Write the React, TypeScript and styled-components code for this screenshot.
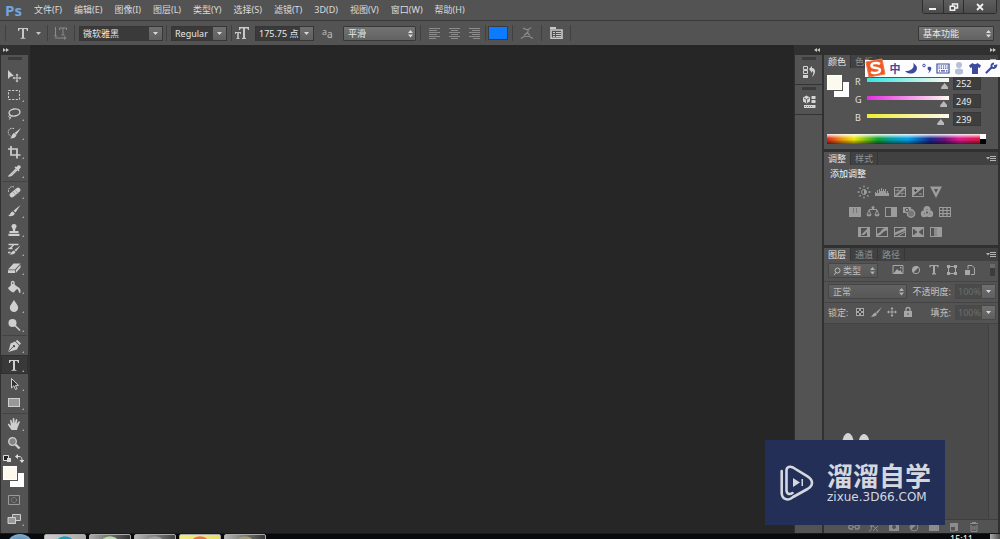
import React from "react";
import styled, { createGlobalStyle, css } from "styled-components";

const GlobalStyle = createGlobalStyle`
  * { box-sizing: border-box; }
  html, body { margin: 0; padding: 0; background: #262626; }
  body, button, input, select {
    font-family: "Noto Sans", "Noto Sans CJK SC", sans-serif;
    font-size: 9px;
    color: #dcdcdc;
  }
  button, input, select { margin: 0; padding: 0; border: 0; border-radius: 0; background: none; outline: 0; }
  h2 { margin: 0; font-weight: 400; }
`;

/* ---------- shell ---------- */

const Window = styled.div`
  position: relative;
  display: flex;
  flex-direction: column;
  height: 100vh;
  min-width: 800px;
  overflow: hidden;
  background: #262626;
`;

const MenuBar = styled.header`
  display: flex;
  align-items: flex-start;
  flex: none;
  height: 21px;
  padding: 0 3px 0 5px;
  background: #535353;
  border-bottom: 1px solid #3a3a3a;
`;

const Brand = styled.div`
  width: 29px;
  font: 700 15px/20px "Open Sans", sans-serif;
  color: #72a5df;
`;

const Menus = styled.nav`
  display: flex;
  flex: 1;
  gap: 12px;
`;

const MenuButton = styled.button`
  line-height: 20px;
  white-space: nowrap;
`;

const WindowControls = styled.div`
  display: flex;
  height: 14px;
  border: 1px solid #2e2e2e;
  border-top: 0;
  border-radius: 0 0 3px 3px;
`;

const WindowButton = styled.button<{ $wide?: boolean }>`
  display: grid;
  place-items: center;
  width: ${(p) => (p.$wide ? 33 : 20)}px;
  background: linear-gradient(#5e5e5e, #4c4c4c);
  color: #f0f0f0;
  & + & { border-left: 1px solid #2e2e2e; }
`;

const OptionsBar = styled.div`
  display: flex;
  align-items: center;
  flex: none;
  height: 24px;
  padding: 0 6px 0 5px;
  background: #535353;
`;

const Rule = styled.span<{ $before?: number; $after?: number }>`
  width: 1px;
  height: 16px;
  margin: 0 ${(p) => p.$after ?? 4}px 0 ${(p) => p.$before ?? 4}px;
  background: #404040;
`;

const IconButton = styled.button<{ $w?: number; $dim?: boolean }>`
  display: grid;
  place-items: center;
  flex: none;
  width: ${(p) => p.$w ?? 20}px;
  height: 18px;
  color: ${(p) => (p.$dim ? "#8c8c8c" : "#c8c8c8")};
`;

const Combo = styled.div<{ $w: number; $off?: boolean }>`
  display: flex;
  flex: none;
  width: ${(p) => p.$w}px;
  height: 15px;
  border: 1px solid ${(p) => (p.$off ? "#484848" : "#363636")};
  background: ${(p) => (p.$off ? "#4a4a4a" : "#3a3a3a")};
  input {
    flex: 1;
    min-width: 0;
    padding: 0 0 0 ${(p) => (p.$off ? 2 : 3)}px;
    color: ${(p) => (p.$off ? "#6c6c6c" : "#e8e8e8")};
  }
`;

const DropButton = styled.button`
  display: grid;
  place-items: center;
  width: 13px;
  background: linear-gradient(#6f6f6f, #5f5f5f);
  color: #d8d8d8;
`;

const SelectBox = styled.div<{ $w: number; $soft?: boolean }>`
  position: relative;
  flex: none;
  width: ${(p) => p.$w}px;
  height: 15px;
  border: 1px solid ${(p) => (p.$soft ? "#464646" : "#383838")};
  border-radius: 1px;
  background: ${(p) => (p.$soft ? "linear-gradient(#616161, #575757)" : "linear-gradient(#737373, #626262)")};
  color: ${(p) => (p.$soft ? "#b0b0b0" : "#dcdcdc")};
  svg { position: absolute; right: 1px; top: 2px; pointer-events: none; }
`;

const Select = styled.select<{ $indent?: number; $soft?: boolean }>`
  appearance: none;
  display: block;
  width: 100%;
  height: 13px;
  padding-left: ${(p) => p.$indent ?? 4}px;
  line-height: 13px;
  color: ${(p) => (p.$soft ? "#bcbcbc" : "#e8e8e8")};
`;

const TextColor = styled.button`
  width: 20px;
  height: 14px;
  border: 1px solid #3c3c3c;
  background: #0d7bff;
`;

const Spring = styled.div`flex: 1;`;

const Spacer = styled.span`width: 3px;`;

const Aa = styled.span`
  display: flex;
  width: 29px;
  padding-left: 8px;
  font-size: 9px;
  line-height: 11px;
  color: #bdbdbd;
  b { padding-top: 3px; font-size: 10px; font-weight: 400; }
`;

const Workspace = styled.div`
  display: flex;
  flex: 1;
  min-height: 0;
`;

/* ---------- tools ---------- */

const ToolColumn = styled.aside`
  display: flex;
  flex-direction: column;
  flex: none;
  width: 30px;
  padding: 0 2px 0 1px;
  background: #303030;
`;

const CollapseBar = styled.button<{ $right?: boolean }>`
  display: flex;
  align-items: center;
  justify-content: ${(p) => (p.$right ? "flex-end" : "flex-start")};
  flex: none;
  width: 100%;
  height: 10px;
  padding: 0 2px;
  color: #c4c4c4;
`;

const ToolPanel = styled.div`
  display: flex;
  flex-direction: column;
  flex: 1;
  background: #535353;
`;

const Grip = styled.span`
  align-self: center;
  flex: none;
  width: 14px;
  height: 3px;
  margin: 2px 0 6px;
  background: #3c3c3c;
`;

const Tool = styled.button<{ $active?: boolean }>`
  position: relative;
  display: grid;
  place-items: center;
  flex: none;
  height: 19px;
  padding-right: 2px;
  color: #cfcfcf;
  ${(p) => p.$active && css`background: #393939; box-shadow: inset 0 0 0 1px #303030;`}
`;

const Flyout = styled.span`
  position: absolute;
  right: 4px;
  bottom: 2px;
  border: 1px solid #a8a8a8;
  border-top-color: transparent;
  border-left-color: transparent;
`;

const ToolRule = styled.span`
  flex: none;
  height: 1px;
  margin: 1px 1px 0;
  background: #434343;
`;

const ColorReset = styled.div`
  display: flex;
  justify-content: space-between;
  flex: none;
  height: 14px;
  padding: 2px 4px 0 2px;
  color: #d0d0d0;
  button { width: 9px; height: 9px; }
  svg { display: block; }
`;

const SwatchPair = styled.div<{ $size: number }>`
  display: grid;
  flex: none;
  width: ${(p) => p.$size + 7}px;
  height: ${(p) => p.$size + 7}px;
  button { width: ${(p) => p.$size}px; height: ${(p) => p.$size}px; grid-area: 1 / 1; }
  button:first-child { align-self: end; justify-self: end; background: #fff; }
  button:last-child { background: #fcf9ef; border: 1px solid #fff; outline: 1px solid #555; }
`;

const ToolSwatches = styled.div`
  display: flex;
  flex: none;
  height: 24px;
  padding: 0 0 0 2px;
`;

/* ---------- docks ---------- */

const Canvas = styled.main`flex: 1; background: #262626;`;

const IconDock = styled.aside`
  display: flex;
  flex-direction: column;
  flex: none;
  width: 30px;
  padding: 0 2px 0 1px;
  background: #303030;
`;

const DockBody = styled.div`flex: 1; background: #535353;`;

const DockGroup = styled.div`
  display: flex;
  flex-direction: column;
  height: 30px;
  border-bottom: 1px solid #333;
  color: #d4d4d4;
  button { display: grid; place-items: center; height: 18px; color: inherit; }
`;

const DockGrip = styled.span`
  align-self: center;
  width: 14px;
  height: 3px;
  margin: 2px 0 3px;
  background: #3c3c3c;
`;

const PanelDock = styled.aside`
  display: flex;
  flex-direction: column;
  flex: none;
  width: 176px;
  padding-right: 2px;
  background: #303030;
`;

const Panel = styled.section<{ $h?: number }>`
  display: flex;
  flex-direction: column;
  min-height: 0;
  ${(p) => (p.$h ? css`flex: none; height: ${p.$h}px; margin-bottom: 3px;` : css`flex: 1;`)}
`;

const Tabs = styled.div`
  display: flex;
  align-items: stretch;
  flex: none;
  height: 13px;
  background: #414141;
`;

const Tab = styled.button<{ $on?: boolean }>`
  width: 27px;
  border-right: 1px solid #363636;
  line-height: 12px;
  white-space: nowrap;
  color: ${(p) => (p.$on ? "#e6e6e6" : "#929292")};
  background: ${(p) => (p.$on ? "#535353" : "transparent")};
`;

const PanelMenu = styled.button`
  margin-left: auto;
  width: 14px;
  color: #b4b4b4;
`;

const PanelBody = styled.div`
  display: flex;
  flex-direction: column;
  flex: 1;
  min-height: 0;
  background: #535353;
`;

const ColorControls = styled.div`
  display: flex;
  flex: 1;
  padding: 7px 17px 0 3px;
`;

const Channels = styled.div`
  display: flex;
  flex-direction: column;
  flex: 1;
  gap: 4px;
  margin-left: 6px;
`;

const Channel = styled.label`
  display: grid;
  grid-template-columns: 12px 1fr 32px;
  height: 14px;
  font-size: 9px;
  line-height: 13px;
  > span { color: #e0e0e0; }
`;

const Track = styled.input<{ $from: string }>`
  appearance: none;
  width: 100%;
  height: 14px;
  background: linear-gradient(90deg, ${(p) => p.$from}, #fcf9ef) 0 3px / 100% 4px no-repeat;
  &::-webkit-slider-thumb {
    appearance: none;
    width: 7px;
    height: 6px;
    margin-top: 8px;
    background: #b9b9b9;
    clip-path: polygon(50% 0, 100% 70%, 100% 100%, 0 100%, 0 70%);
  }
`;

const ValueInput = styled.input`
  justify-self: end;
  width: 28px;
  height: 14px;
  margin-top: 1px;
  padding-left: 2px;
  background: #3e3e3e;
  border: 1px solid #383838;
  color: #ececec;
`;

const Spectrum = styled.div`
  display: flex;
  flex: none;
  height: 10px;
  margin: 0 12px 5px 3px;
  background:
    linear-gradient(rgba(255,255,255,.95), rgba(255,255,255,0) 45%, rgba(0,0,0,0) 55%, rgba(0,0,0,.55)),
    linear-gradient(90deg, #e02020, #f0a010 10%, #f0e800 17%, #10a030 32%, #00a0a0 40%, #00a0e8 51%, #182890 65%, #701080 74%, #e01890 83%, #e01828);
`;

const SpectrumEnds = styled.span`
  width: 6px;
  margin-left: auto;
  background: linear-gradient(#fff 50%, #000 50%);
`;

const AdjustTitle = styled.h2`
  padding: 0 6px;
  font-size: 9px;
  line-height: 18px;
  color: #f4f4f4;
`;

const AdjustRows = styled.div`
  display: flex;
  flex-direction: column;
  align-items: center;
  gap: 6px;
  padding: 2px 22px 0 0;
`;

const AdjustRow = styled.div`
  display: flex;
  gap: 4px;
  color: #9c9c9c;
  button { width: 14px; height: 14px; color: inherit; }
  svg { display: block; }
`;

const LayerRow = styled.div`
  display: flex;
  align-items: center;
  flex: none;
  height: 21px;
  padding: 0 2px 2px 4px;
  border-bottom: 1px solid #444;
  color: #bdbdbd;
`;

const FieldLabel = styled.label`
  margin-right: 4px;
  white-space: nowrap;
  color: #c4c4c4;
`;

const LockLabel = styled.span`
  margin-right: 6px;
  white-space: nowrap;
  color: #c4c4c4;
`;

const FilterIcons = styled.div<{ $gap: number }>`
  display: flex;
  flex: 1;
  gap: ${(p) => p.$gap}px;
  color: #a8a8a8;
  button { width: 12px; height: 12px; color: inherit; }
  svg { display: block; }
`;

const FilterSwitch = styled.button`
  width: 5px;
  height: 12px;
  margin-right: 1px;
  background: linear-gradient(#6a6a6a 35%, #3c3c3c 35%);
`;

const SearchChoice = styled.div`
  position: relative;
  margin-right: 14px;
  > svg { position: absolute; left: 5px; top: 4px; pointer-events: none; }
`;

const LayerList = styled.div`
  flex: 1;
  min-height: 0;
  background: #4a4a4a;
  border-right: 9px solid #4f4f4f;
  box-shadow: inset -1px 0 #404040;
`;

const LayerFooter = styled.div`
  display: flex;
  align-items: center;
  justify-content: flex-end;
  flex: none;
  gap: 8px;
  height: 14px;
  padding: 0 18px 0 0;
  border-top: 1px solid #3e3e3e;
  background: #535353;
  color: #8c8c8c;
  button { width: 12px; height: 12px; color: inherit; }
  svg { display: block; }
`;

/* ---------- taskbar ---------- */

const Taskbar = styled.footer`
  display: flex;
  flex: none;
  gap: 3px;
  height: 6px;
  padding-left: 6px;
  overflow: hidden;
  background: #07090d;
  border-top: 1px solid #17191c;
`;

const StartOrb = styled.button`
  width: 28px;
  height: 28px;
  margin-right: 7px;
  border-radius: 50%;
  background: radial-gradient(#5a8fb8 40%, #a8c3d6);
`;

const TaskButton = styled.button<{ $tone: string; $mark: string }>`
  width: 42px;
  height: 24px;
  border: 1px solid #aaa;
  border-radius: 2px 2px 0 0;
  background: radial-gradient(ellipse 10px 8px at 50% 9px, ${(p) => p.$mark} 90%, transparent), ${(p) => p.$tone};
`;

const Clock = styled.time`
  margin-left: auto;
  font-size: 9px;
  line-height: 10px;
  color: #fff;
`;

const ShowDesktop = styled.button`
  width: 10px;
  height: 24px;
  margin-left: 14px;
  background: linear-gradient(90deg, #aaa, #4c4c4c);
`;

/* ---------- floating layers ---------- */

const InputMethodBar = styled.div`
  position: absolute;
  top: 58px;
  right: 0;
  display: flex;
  align-items: center;
  width: 135px;
  height: 20px;
  color: #3d4b9f;
  background: linear-gradient(transparent 2px, #fdfdff 2px, #fdfdff 19px, transparent 19px);
  button { display: grid; place-items: center; width: 16px; height: 18px; color: inherit; font-weight: 700; font-size: 11px; line-height: 18px; }
  button:first-of-type { padding-top: 1px; }
`;

const Mascot = styled.div`
  position: absolute;
  right: 130px;
  bottom: 85px;
  display: flex;
  gap: 4px;
  height: 21px;
  span { width: 12px; height: 24px; border-radius: 50%; background: #d4d4d4; }
  span:last-child { margin-top: 1px; }
`;

const Watermark = styled.div`
  position: absolute;
  right: 55px;
  bottom: 14px;
  display: flex;
  align-items: center;
  gap: 12px;
  width: 180px;
  height: 85px;
  padding-left: 15px;
  background: #232f57;
  color: #d4d7df;
  svg { flex: none; }
`;

const MarkText = styled.div`
  display: flex;
  flex-direction: column;
  gap: 2px;
  strong { font: 700 26px/26px "Noto Sans CJK SC", sans-serif; white-space: nowrap; }
  span { font: 400 12px/14px "DejaVu Sans", sans-serif; }
`;

/* ---------- drawings ---------- */

const Art = ({ children, w = 14, h = 14, box }: { children: React.ReactNode; w?: number; h?: number; box?: string }) => (
  <svg width={w} height={h} viewBox={box ?? `0 0 ${w} ${h}`} fill="none" stroke="currentColor" aria-hidden="true">
    {children}
  </svg>
);
const solid = { fill: "currentColor", stroke: "none" };

const Caret = () => <Art w={5} h={3}><path {...solid} d="M0 0h5L2.5 3z" /></Art>;
const UpDown = () => <Art w={7} h={9}><path {...solid} d="M1 4h5L3.500 1zM1 5.500h5L3.500 8.500z" /></Art>;
const Chevrons = ({ left }: { left?: boolean }) => (
  <Art w={6} h={4}><path {...solid} d={left ? "M3 0v4L0 2zM6 0v4L3 2z" : "M0 0v4l3-2zM3 0v4l3-2z"} /></Art>
);
const MenuLines = () => <Art w={10} h={6}><path {...solid} d="M0 1h4L2 3.500zM4 0h6v1H4zM4 2h6v1H4zM4 4h6v1H4z" /></Art>;
const letterT = "M2 2h10v3h-1c-.2-1.500-.8-2-2-2H8v8c0 .7.300 1 1.500 1v.7h-5V12C5.700 12 6 11.700 6 11V3H5c-1.200 0-1.800.5-2 2H2z";

const tools: Record<string, { label: string; art: React.ReactNode; flat?: boolean }> = {
  move: { label: "移动", flat: true, art: <><path {...solid} d="M1 1v9l2.500-2.400L7 7z" /><path d="M10 5.500v7M6.500 9h7" /><path {...solid} d="M10 4.500l1.500 2h-3zM10 13.500l1.500-2h-3zM5.500 9l2-1.500v3zM14.500 9l-2-1.500v3z" /></> },
  marquee: { label: "选框", art: <rect x="1.500" y="2.500" width="11" height="9" strokeDasharray="2.200 1.400" /> },
  lasso: { label: "套索", art: <><ellipse cx="7.500" cy="5.500" rx="5.500" ry="3.500" transform="rotate(-10 7.500 5.500)" strokeWidth="1.400" /><path d="M3.500 8c-2 0-2.500 2.500-.5 2.500s1-2 0-2.400M3.500 10c0 1.500-.5 2-1.500 2.500" /></> },
  quick: { label: "快速选择", art: <><path strokeDasharray="1.500 1" d="M7 2.500C3 1.500 1 4 1.300 6.500S3 10 4 10" /><path {...solid} d="M14 2 9.500 8.500 7.500 7zM7 7l2.500 2C9 11.500 6.500 12.500 3 12.500c2-1 1.500-4.500 4-5.500z" /></> },
  crop: { label: "裁剪", art: <path strokeWidth="1.700" d="M4 1v9h9.500M1 4h9v9.500" /> },
  eyedrop: { label: "吸管", art: <><path {...solid} d="M7.500 3.500 8.500 2.500l1.200.5c1-2 2.500-2.300 3.500-1.300s.7 2.500-1.300 3.500l.6 1.200-1 1z" /><path strokeWidth="1.200" d="m9 5-6 6-1.500 1.500M10 6l-5.500 5.500-2.500.7" /></> },
  heal: { label: "修复画笔", art: <><path strokeDasharray="1.500 1" d="M7 2C3 .5 1 4 1.500 7" /><path strokeWidth="4.800" strokeLinecap="round" d="m5 10 6-5" /><path stroke="#999" strokeWidth=".8" d="m6.200 7 2.600 3.400M8.500 5.300l2.500 3.400" /></> },
  brush: { label: "画笔", art: <path {...solid} d="M13.500 1 8.500 8.500l-2-1.700zM5.800 7.500l2 1.700C7.500 11.500 5 12.500 1 12c2.500-1 2-4 4.800-4.500z" /> },
  stamp: { label: "仿制图章", art: <path {...solid} d="M7 1a2.400 2.400 0 0 0-1.500 4.400L6 8H2.500v2h9V8H8l.5-2.600A2.400 2.400 0 0 0 7 1zM1.500 10.800h11V13h-11z" /> },
  history: { label: "历史记录画笔", art: <><path {...solid} d="M13.500 3.500 9 9.500 7.500 8zM7 8.500 8.500 10C8 12 6 12.500 2.500 12.500c2-1 2-3.500 4.500-4z" /><path strokeWidth="1.300" d="M1.500 2.500H7l-4 4M7.500 2.500h4M1.500 6.500h4M1 10.500h2.500" /></> },
  eraser: { label: "橡皮擦", art: <><path {...solid} d="m1 8.500 5.500-6H13.500L8 8.500zM1 9.200h7V12H1zM8.800 8.900l4.700-5.200v3L8.800 12z" /></> },
  bucket: { label: "油漆桶", art: <><path {...solid} d="m1 8 5-4.500 5.500 4-5 5C5 12 2 10.500 1 8zM11 7c2 1 3 3 2.500 5.500-1 1-2 0-1.800-1.500L10 8.500z" /><path strokeWidth="1.300" d="M4.500 6V2.500c0-1.500 2.500-1.500 2.500 0V6" /></> },
  blur: { label: "模糊", art: <path {...solid} d="M7 1c1.500 3 4.200 5 4.200 7.700a4.200 4.200 0 0 1-8.400 0C2.800 6 5.500 4 7 1z" /> },
  dodge: { label: "减淡", art: <><circle {...solid} cx="5.500" cy="5" r="4" /><path strokeWidth="1.600" d="m8 7.500 5 5" /></> },
  pen: { label: "钢笔", art: <><path {...solid} d="m8 2.500 4 4-2 4L3 12.500 1 13l1-2.500 1.500-6z" /><path strokeWidth="2" d="m9.500 1.500 3.800 3.800" /><path stroke="#444" strokeWidth=".8" d="m1.500 12.500 5-5" /><circle cx="7" cy="7.200" r="1.100" fill="#444" stroke="none" /></> },
  type: { label: "文字", art: <path {...solid} d={letterT} /> },
  path: { label: "路径选择", art: <path d="M4.500 1.500v9.500l2.300-2.200L8.500 12.500l1.500-.7-1.600-3.400H11.500z" fill="#333" /> },
  shape: { label: "矩形", art: <rect x="1.500" y="2.500" width="11" height="8" fill="#999" /> },
  hand: { label: "抓手", art: <path {...solid} d="M4.500 13 1 8c-.5-1 .7-1.500 1.400-.8L4 8.800 3 3.500c0-1 1.200-1.200 1.500-.2L5.600 6.500 5.700 2c0-1.200 1.600-1.200 1.700 0l.2 4.300L8.800 2.500c.4-1 1.700-.7 1.500.4L9.700 7l1.800-2.500c.7-.8 1.800-.2 1.300.8L10.500 11l-.5 2z" /> },
  zoom: { label: "缩放", flat: true, art: <><circle cx="5.500" cy="5.500" r="3.800" fill="#858585" strokeWidth="1.300" /><path strokeWidth="2.400" d="m8.500 8.500 4 4" /></> },
};
const toolGroups = [
  ["move", "marquee", "lasso", "quick", "crop", "eyedrop"],
  ["heal", "brush", "stamp", "history", "eraser", "bucket", "blur", "dodge"],
  ["pen", "type", "path", "shape"],
  ["hand", "zoom"],
];

const frame = <rect x="1.500" y="2.500" width="11" height="9" />;
const adjustments: { label: string; art: React.ReactNode }[][] = [
  [
    { label: "亮度", art: <><circle cx="7" cy="7" r="2.500" /><path {...solid} d="M7 4.500a2.500 2.500 0 0 1 0 5z" /><path strokeWidth="1.300" d="M7 .5v2M7 11.500v2M.5 7h2M11.500 7h2M2.400 2.400l1.400 1.400M10.200 10.200l1.400 1.400M11.600 2.400l-1.400 1.400M3.800 10.200l-1.400 1.400" /></> },
    { label: "色阶", art: <path {...solid} d="M0 11V7h1v1h1V5h1v3h1V4h1v2h1V3h1v3h1V4h1v2h1V4h1v4h1V6h1v2h1v3z" /> },
    { label: "曲线", art: <>{frame}<path strokeWidth=".6" d="M5 3v8M9 3v8M2 5.500h10M2 8.500h10" /><path strokeWidth="1.300" d="M2 11C7 10 7 4 12 3" /></> },
    { label: "曝光度", art: <>{frame}<path {...solid} d="M2 11V3h10z" /><path stroke="#444" d="M3 5.500h3M4.500 4v3" /><path d="M8 9h3" /></> },
    { label: "自然饱和度", art: <path {...solid} fillRule="evenodd" d="M1 1.500h12L7 13zM5 4l2 4 2-4z" /> },
  ],
  [
    { label: "色相", art: <>{frame}<path {...solid} d="M2 3h3v5H2zM5.500 3h3v5h-3zM9 3h3v5H9zM2 8h10v3H2z" /></> },
    { label: "色彩平衡", art: <><path d="M7 2v2M3 4.500h8" /><circle {...solid} cx="7" cy="2.500" r="1.500" /><path d="m3 5-2 5h4zM11 5l-2 5h4z" /><path {...solid} d="M.5 9.500h5c-.5 2.500-4.500 2.500-5 0zM8.500 9.500h5c-.5 2.500-4.500 2.500-5 0z" /></> },
    { label: "黑白", art: <>{frame}<path {...solid} d="M7 3h5v8H7z" /></> },
    { label: "照片滤镜", art: <><rect {...solid} x="1" y="2" width="8" height="6" /><circle cx="9" cy="8.500" r="3.700" fill="#777" strokeWidth="1.400" /><circle cx="5" cy="5" r="1.700" stroke="#555" /></> },
    { label: "通道混合器", art: <><circle cx="7" cy="4.500" r="2" strokeWidth="3" /><circle cx="4.300" cy="8.800" r="2" strokeWidth="3" /><circle cx="9.700" cy="8.800" r="2" strokeWidth="3" /><circle cx="7" cy="7.500" r="1" fill="#555" stroke="none" /></> },
    { label: "颜色查找", art: <>{frame}<path strokeWidth="1.200" d="M5 2v10M9 2v10M1 5.500h12M1 8.700h12" /></> },
  ],
  [
    { label: "反相", art: <>{frame}<path {...solid} d="M2 3h2v8H2zM10 3h2v8h-2z" /><path {...solid} d="m4 10 6-6v3l-3 3z" /></> },
    { label: "色调分离", art: <>{frame}<path {...solid} d="M2 8.500c4 0 4-5 8-5.500h2v2.500C8 5.500 7 10.500 2 11z" /></> },
    { label: "阈值", art: <>{frame}<path {...solid} d="M2 7.500 12 3v3L2 10z" /><path d="m5 11 7-4" /></> },
    { label: "可选颜色", art: <>{frame}<path {...solid} d="M2 3h10L7 7zM2 11h10L7 7z" /><path d="m2 3 10 8M12 3 2 11" /></> },
    { label: "渐变映射", art: <>{frame}<path {...solid} d="M8 3h4v8H8z" /><path fill="#8a8a8a" stroke="none" d="M5 3h3v8H5z" /></> },
  ],
];

const menus = ["文件(F)", "编辑(E)", "图像(I)", "图层(L)", "类型(Y)", "选择(S)", "滤镜(T)", "3D(D)", "视图(V)", "窗口(W)", "帮助(H)"];
const channels = [
  { name: "R", value: 252, from: "#30e6e4" },
  { name: "G", value: 249, from: "#e82ce0" },
  { name: "B", value: 239, from: "#f0ec30" },
];
const tasks = [
  ["linear-gradient(90deg, #ccc, #aaa)", "#159fb5"],
  ["linear-gradient(90deg, #aaa, #333)", "#b8dba5"],
  ["linear-gradient(90deg, #b5b5b5, #444)", "#a0a0a0"],
  ["linear-gradient(90deg, #f3ec80, #e9df66)", "#ec6f57"],
  ["linear-gradient(90deg, #b5b5b5, #383838)", "#a39a7c"],
];

const ComboBox = ({ w, value, label }: { w: number; value: string; label: string }) => (
  <Combo $w={w}>
    <input aria-label={label} defaultValue={value} />
    <DropButton aria-label={`${label}列表`}><Caret /></DropButton>
  </Combo>
);

const Choice = ({ w, value, label, soft, indent }: { w: number; value: string; label: string; soft?: boolean; indent?: number }) => (
  <SelectBox $w={w} $soft={soft}>
    <Select aria-label={label} $soft={soft} $indent={indent}><option>{value}</option></Select>
    <UpDown />
  </SelectBox>
);

const Align = ({ d, label }: { d: string; label: string }) => (
  <IconButton aria-label={label} $dim><Art w={12} h={12}><path d={d} /></Art></IconButton>
);

const Swatches = ({ size }: { size: number }) => (
  <SwatchPair $size={size}>
    <button aria-label="背景色" />
    <button aria-label="前景色" />
  </SwatchPair>
);

const PanelTabs = ({ names }: { names: string[] }) => (
  <Tabs role="tablist">
    {names.map((n, i) => <Tab key={n} role="tab" aria-selected={i === 0} $on={i === 0}>{n}</Tab>)}
    <PanelMenu aria-label="面板菜单"><MenuLines /></PanelMenu>
  </Tabs>
);

const Small = ({ label, children }: { label: string; children: React.ReactNode }) => (
  <button aria-label={label}><Art w={12} h={12}>{children}</Art></button>
);

export default function App() {
  return (
    <Window>
      <GlobalStyle />
      <MenuBar>
        <Brand>Ps</Brand>
        <Menus>{menus.map((m) => <MenuButton key={m}>{m}</MenuButton>)}</Menus>
        <WindowControls>
          <WindowButton aria-label="最小化"><Art w={10} h={8}><path strokeWidth="2" d="M1 6h7" /></Art></WindowButton>
          <WindowButton aria-label="还原"><Art w={10} h={8}><path strokeWidth="1.500" d="M3.500 3V1h5v4H6.500M1.200 3.200h4.500v4H1.200z" /></Art></WindowButton>
          <WindowButton aria-label="关闭" $wide><Art w={8} h={8}><path strokeWidth="1.800" d="m1 1 6 6M7 1 1 7" /></Art></WindowButton>
        </WindowControls>
      </MenuBar>

      <OptionsBar>
        <Rule $before={0} $after={7} />
        <IconButton aria-label="文字工具"><Art><path {...solid} d={letterT} /></Art></IconButton>
        <IconButton $w={10} aria-label="工具预设"><Caret /></IconButton>
        <Rule $before={4} $after={3} />
        <IconButton $dim aria-label="切换文本取向"><Art><path d="M1.500 1v9M5.500 4V2h7v2M9 2v7M7.500 9h3M1 12h11M10 10.500l2 1.500-2 1.500M0 10h3" /></Art></IconButton>
        <Rule $before={3} $after={4} />
        <ComboBox w={84} value="微软雅黑" label="字体" />
        <Rule $before={3} $after={4} />
        <ComboBox w={56} value="Regular" label="字体样式" />
        <Rule $before={4} $after={0} />
        <IconButton aria-label="字体大小图标"><Art><path {...solid} d="M4 1h10v3h-1c0-1-.5-1.500-1.500-1.500H10V11c0 .7.300 1 1 1v1H7v-1c.7 0 1-.3 1-1V2.500H6.500C5.500 2.500 5 3 5 4H4zM0 6h6v2h-.7c0-.6-.3-.9-.9-.9H3.800v4.700l.7.400v.8h-3v-.8l.7-.4V7.100h-.6c-.6 0-.9.3-.9.9H0z" /></Art></IconButton>
        <Spacer />
        <ComboBox w={59} value="175.75 点" label="字体大小" />
        <Aa>a<b>a</b></Aa>
        <Choice w={73} value="平滑" label="消除锯齿" />
        <Rule $before={4} $after={4} />
        <Align label="左对齐" d="M0 1.500h11M0 3.500h8M0 5.500h11M0 7.500h8M0 9.500h11M0 11.500h7" />
        <Align label="居中对齐" d="M0 1.500h11M2 3.500h7M0 5.500h11M2 7.500h7M0 9.500h11M2 11.500h7" />
        <Align label="右对齐" d="M0 1.500h11M3 3.500h8M0 5.500h11M3 7.500h8M0 9.500h11M4 11.500h7" />
        <Rule $before={0} $after={2} />
        <TextColor aria-label="文本颜色" />
        <Rule $before={4} $after={4} />
        <IconButton $dim aria-label="文字变形"><Art><path strokeWidth="1.200" d="M3 2c3 2 6 2 8-.5M8 3v3L4 9.500M7 6.500l3 3M1 12.500c3-3 8-3 12 0" /></Art></IconButton>
        <Rule $before={4} $after={4} />
        <IconButton aria-label="字符面板"><Art w={13}><path strokeWidth="1.600" d="M1 4h11v8.200H1z" /><path {...solid} d="M0 1h6v2H0zM3 6h2v1H3zM6 6h5v1H6zM3 8h2v1H3zM6 8h5v1H6zM3 10h2v1H3zM6 10h5v1H6z" /></Art></IconButton>
        <Rule $before={4} $after={0} />
        <Spring />
        <Choice w={76} value="基本功能" label="工作区" />
      </OptionsBar>

      <Workspace>
        <ToolColumn>
          <CollapseBar aria-label="展开工具栏"><Chevrons /></CollapseBar>
          <ToolPanel role="toolbar" aria-label="工具">
            <Grip />
            {toolGroups.map((group, i) => (
              <React.Fragment key={i}>
                {i > 0 && <ToolRule />}
                {group.map((id) => (
                  <Tool key={id} aria-label={tools[id].label} $active={id === "type"}>
                    <Art>{tools[id].art}</Art>
                    {!tools[id].flat && <Flyout />}
                  </Tool>
                ))}
              </React.Fragment>
            ))}
            <ColorReset>
              <button aria-label="默认颜色"><Art w={9} h={9}><path fill="#222" d="M.5 1.500h5v5h-5z" /><path {...solid} d="M4 4h4v4H4z" /></Art></button>
              <button aria-label="切换颜色"><Art w={9} h={9}><path d="M2 2.500h2c2.500 0 3 1.500 3 4" /><path {...solid} d="M0 2.500 3 0v5zM7 9 4.500 6h5z" /></Art></button>
            </ColorReset>
            <ToolSwatches><Swatches size={14} /></ToolSwatches>
            <Tool aria-label="快速蒙版"><Art><path stroke="#9a9a9a" d="M1.500 2.500h11v9h-11z" /><circle cx="7" cy="7" r="2.500" stroke="#9a9a9a" strokeDasharray="1 1" /></Art></Tool>
            <Tool aria-label="屏幕模式"><Art><path fill="#777" d="M5.500 2.500h8v6h-8z" /><path fill="#999" d="M1 5.500h7.500v6H1z" /></Art><Flyout /></Tool>
          </ToolPanel>
        </ToolColumn>

        <Canvas />

        <IconDock>
          <CollapseBar $right aria-label="展开面板"><Chevrons left /></CollapseBar>
          <DockBody>
            <DockGroup>
              <DockGrip />
              <button aria-label="历史记录"><Art><path d="M1.500 1.500h4v3h-4zM1.500 5.500h4v3h-4z" /><path {...solid} d="M1 10h5v3H1zM7 4l3-3v2c4 0 4 6 0 9 2-4 1.500-5.500 0-6v2z" /></Art></button>
            </DockGroup>
            <DockGroup>
              <DockGrip />
              <button aria-label="属性"><Art><path {...solid} d="M4.500.5 8 2.500v4l-3.500 2L1 6.500v-4z" /><path stroke="#555" strokeWidth=".9" d="m2 3 2.500 1.500L7 3M4.500 4.500V8" /><path {...solid} d="M9.500 1h4v3h-4zM9.500 5h4v3h-4zM2 10h11.500v3H2z" /><path stroke="#777" d="M3 11.500h1M5 11.500h1M7 11.500h1M9 11.500h1" /></Art></button>
            </DockGroup>
          </DockBody>
        </IconDock>

        <PanelDock>
          <CollapseBar $right aria-label="折叠面板"><Chevrons /></CollapseBar>
          <Panel $h={94}>
            <PanelTabs names={["颜色", "色板"]} />
            <PanelBody>
              <ColorControls>
                <Swatches size={15} />
                <Channels>
                  {channels.map((c) => (
                    <Channel key={c.name}>
                      <span>{c.name}</span>
                      <Track type="range" min={0} max={255} defaultValue={c.value} $from={c.from} aria-label={`${c.name} 滑块`} />
                      <ValueInput defaultValue={c.value} aria-label={c.name} />
                    </Channel>
                  ))}
                </Channels>
              </ColorControls>
              <Spectrum><SpectrumEnds /></Spectrum>
            </PanelBody>
          </Panel>

          <Panel $h={93}>
            <PanelTabs names={["调整", "样式"]} />
            <PanelBody>
              <AdjustTitle>添加调整</AdjustTitle>
              <AdjustRows>
                {adjustments.map((row, i) => (
                  <AdjustRow key={i}>
                    {row.map((a) => <button key={a.label} aria-label={a.label}><Art>{a.art}</Art></button>)}
                  </AdjustRow>
                ))}
              </AdjustRows>
            </PanelBody>
          </Panel>

          <Panel>
            <PanelTabs names={["图层", "通道", "路径"]} />
            <PanelBody>
              <LayerRow>
                <SearchChoice>
                  <Choice w={50} value="类型" label="滤镜类型" soft indent={14} />
                  <Art w={8} h={9}><circle cx="4.500" cy="3.500" r="2.500" /><path d="M3 5.500 1 8" /></Art>
                </SearchChoice>
                <FilterIcons $gap={6}>
                  <Small label="像素图层"><path d="M1 1.500h10v8H1z" /><path {...solid} d="m2 9 3-4 2 2 1.500-1L10 9zM8 3h1.500v1.500H8z" /></Small>
                  <Small label="调整图层"><circle cx="6" cy="6" r="3.700" /><path {...solid} d="M3.200 8.800a4 4 0 0 1 5.600-5.600z" /></Small>
                  <Small label="文字图层"><path {...solid} d="M1.500 1h9v2.500h-1C9.500 2.500 9 2 8 2H7v7l1 .5v1H4v-1L5 9V2H4c-1 0-1.500.5-1.500 1.500h-1z" /></Small>
                  <Small label="形状图层"><path d="M2.500 2.500h7v7h-7z" /><path {...solid} d="M1 1h3v3H1zM8 1h3v3H8zM1 8h3v3H1zM8 8h3v3H8z" /></Small>
                  <Small label="智能对象"><path d="M4 5V1.500h4l2.500 2.500v6.500H7" /><path {...solid} d="M1 6h5v5H1z" /></Small>
                </FilterIcons>
                <FilterSwitch aria-label="图层过滤开关" />
              </LayerRow>
              <LayerRow>
                <Choice w={79} value="正常" label="混合模式" soft />
                <Spring />
                <FieldLabel htmlFor="opacity">不透明度:</FieldLabel>
                <Combo $w={41} $off><input id="opacity" defaultValue="100%" /><DropButton aria-label="不透明度列表"><Caret /></DropButton></Combo>
              </LayerRow>
              <LayerRow>
                <LockLabel>锁定:</LockLabel>
                <FilterIcons $gap={4}>
                  <Small label="锁定透明像素"><path {...solid} d="M2 2h8v8H2z" /><path fill="#444" stroke="none" d="M3 3h2v2H3zM7 3h2v2H7zM5 5h2v2H5zM3 7h2v2H3zM7 7h2v2H7z" /></Small>
                  <Small label="锁定图像像素"><path {...solid} d="M12 1 7.500 7.500 6 6.300zM5.500 6.500 7 8c-.5 2-3 3-6.500 2.500C3 10 2.500 7.500 5.500 6.500z" /></Small>
                  <Small label="锁定位置"><path d="M6 2v8M2 6h8" /><path {...solid} d="M6 1l1.700 2H4.300zM6 11l1.700-2H4.300zM1 6l2-1.700v3.400zM11 6 9 4.300v3.400z" /></Small>
                  <Small label="锁定全部"><path {...solid} d="M2 5h8v6H2z" /><path strokeWidth="1.300" d="M4 5V3c0-2 4-2 4 0v2" /><path stroke="#555" d="M6 7v2" /></Small>
                </FilterIcons>
                <FieldLabel htmlFor="fill">填充:</FieldLabel>
                <Combo $w={41} $off><input id="fill" defaultValue="100%" /><DropButton aria-label="填充列表"><Caret /></DropButton></Combo>
              </LayerRow>
              <LayerList />
              <LayerFooter>
                <Small label="链接图层"><path strokeWidth="1.300" d="M5 4H3C0 4 0 8 3 8h2M7 4h2c3 0 3 4 0 4H7M4 6h4" /></Small>
                <Small label="图层样式"><path d="M6 2C4 1 4 3 3.500 6S3 10 1 10M2 5h4M6 5.500l4 5M10 5l-5 5" /></Small>
                <Small label="图层蒙版"><path {...solid} fillRule="evenodd" d="M1 2h10v8H1zM6 4a2 2 0 1 0 .1 0z" /></Small>
                <Small label="新建调整图层"><circle cx="6" cy="6" r="4" /><path {...solid} d="M3.200 8.800a4 4 0 0 1 5.600-5.600z" /></Small>
                <Small label="新建组"><path {...solid} d="M1 2h4l1 1h5v7H1z" /></Small>
                <Small label="新建图层"><path {...solid} d="M2 2h8v8H7V6H2z" /><path d="M2.500 6v4H7" /></Small>
                <Small label="删除图层"><path {...solid} d="M2 2h8v1H2zM4 1h4v1H4z" /><path d="M3 4v6.500h6V4M5 5v4M7 5v4" /></Small>
              </LayerFooter>
            </PanelBody>
          </Panel>
        </PanelDock>
      </Workspace>

      <Taskbar>
        <StartOrb aria-label="开始" />
        {tasks.map(([tone, mark], i) => <TaskButton key={i} $tone={tone} $mark={mark} aria-label={`任务 ${i + 1}`} />)}
        <Clock>15:11</Clock>
        <ShowDesktop aria-label="显示桌面" />
      </Taskbar>

      <InputMethodBar>
        <svg width="22" height="20" viewBox="0 0 22 20" aria-hidden="true">
          <path d="M1 4 17 1l3 15L4 19z" fill="#ee5a24" stroke="#f47a45" strokeLinejoin="round" />
          <path d="M15 6C12 4 6 5 6.500 8s8.500 1 8.500 4-6 4-9 2" fill="none" stroke="#fff" strokeWidth="2.500" />
        </svg>
        <button>中</button>
        <button aria-label="半角"><Art><path {...solid} d="M9 2c2 4-1 8-8 8 5 5 12 2 12-3 0-2-2-4-4-5z" /></Art></button>
        <button aria-label="标点"><Art><circle cx="4" cy="4.500" r="1.300" /><path {...solid} d="M8 6c3-1 4 1 3 3s-2 3-3 3c1-1 1.500-2 1.300-2.500C8 9.500 7 7 8 6z" /></Art></button>
        <button aria-label="软键盘"><Art><path strokeWidth="1.200" d="M1 3h12v9H1z" /><path strokeWidth="1.200" strokeDasharray="1.300 .9" d="M2.500 5h9.500M2.500 7.200h9.500" /><path strokeWidth="1.300" d="M3 9.800h1M5 9.800h4M10 9.800h1.500" /></Art></button>
        <button aria-label="账户"><Art><g fill="#b5bfd6" stroke="none"><circle cx="7" cy="4" r="3" /><path d="M3 9c2-2 6-2 8 0v3c-2 2-6 2-8 0z" /></g></Art></button>
        <button aria-label="皮肤"><Art><path {...solid} d="M4.500 2c1 1.500 4 1.500 5 0l3.500 2.500-1.300 2.500-1.700-.8V13H4V6.200L2.300 7 1 4.500z" /></Art></button>
        <button aria-label="设置"><Art><path strokeWidth="2.200" strokeLinecap="round" d="m2.500 11.500 5-5" /><path strokeWidth="1.900" d="M10 2.500C7.500 2.500 6.800 5 8 6.300s4 .7 4.300-1.800l-2.300.7" /></Art></button>
      </InputMethodBar>

      <Mascot><span /><span /></Mascot>
      <Watermark>
        <Art w={35} h={36}>
          <path strokeWidth="2.600" strokeLinecap="round" d="M1.700 6v22c0 6 6 8 10 5l2-1.500" />
          <path strokeWidth="2.600" strokeLinejoin="round" strokeLinecap="round" d="M6.500 25V5.500c0-4 3.500-4.500 6.500-3l14.500 8.800c6 3.800 6 9 0 12.700L14 31.500M6.500 25c0 4 3 5 6 3" />
          <path {...solid} d="M13 13v9l7-4.500zM21.500 14H23v7h-1.500z" />
        </Art>
        <MarkText><strong>溜溜自学</strong><span>zixue.3D66.COM</span></MarkText>
      </Watermark>
    </Window>
  );
}
